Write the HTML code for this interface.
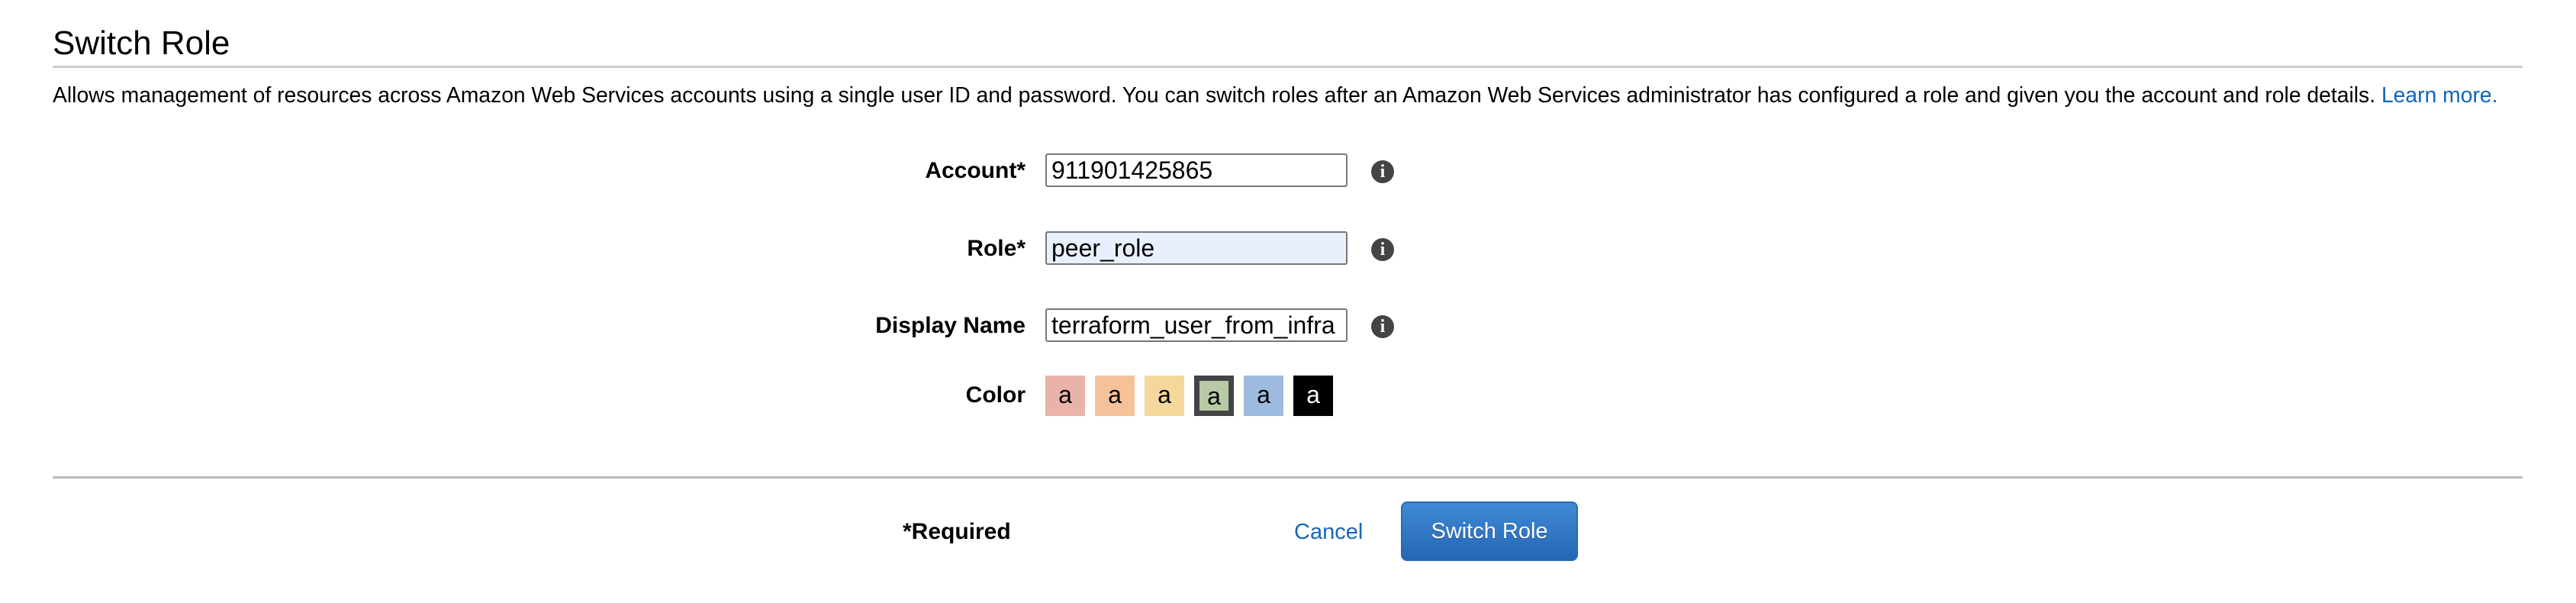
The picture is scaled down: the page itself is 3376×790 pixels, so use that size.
<!DOCTYPE html>
<html><head><style>
body{margin:0;width:3376px;height:790px;background:#fff;font-family:"Liberation Sans",sans-serif;position:relative;overflow:hidden;color:#000}
.a{position:absolute;white-space:nowrap}
.lbl{position:absolute;right:2032px;font-weight:bold;font-size:30px;line-height:40px}
.inp{position:absolute;left:1370px;width:396px;height:44px;border:2px solid #777;border-radius:3px;box-sizing:border-box;font-size:32px;line-height:40px;padding-left:6px;overflow:hidden;white-space:nowrap}
.info{position:absolute;left:1797px;width:30px;height:30px;border-radius:50%;background:#444;color:#fff;font-family:"Liberation Serif",serif;font-weight:bold;font-size:24px;line-height:30px;text-align:center}
.sw{position:absolute;top:492px;width:52px;height:53px;box-sizing:border-box;font-size:32px;line-height:50px;text-align:center}
</style></head><body>
<div class="a" style="left:69px;top:32px;font-size:44px;line-height:50px">Switch Role</div>
<div class="a" style="left:69px;top:86px;width:3237px;height:3px;background:#ccc"></div>
<div class="a" style="left:69px;top:106px;font-size:28.3px;line-height:36px">Allows management of resources across Amazon Web Services accounts using a single user ID and password. You can switch roles after an Amazon Web Services administrator has configured a role and given you the account and role details. <span style="color:#1166bb">Learn more.</span></div>

<div class="lbl" style="top:204px">Account*</div>
<div class="inp" style="top:201px">911901425865</div>
<div class="info" style="top:210px">i</div>

<div class="lbl" style="top:306px">Role*</div>
<div class="inp" style="top:303px;background:#e8f0fe">peer_role</div>
<div class="info" style="top:312px">i</div>

<div class="lbl" style="top:407px">Display Name</div>
<div class="inp" style="top:404px">terraform_user_from_infra</div>
<div class="info" style="top:413px">i</div>

<div class="lbl" style="top:498px">Color</div>
<div class="sw" style="left:1370px;background:#eab3aa">a</div>
<div class="sw" style="left:1435px;background:#f4c199">a</div>
<div class="sw" style="left:1500px;background:#f6d79b">a</div>
<div class="sw" style="left:1565px;background:#b8c9a5;border:7px solid #444;line-height:40px">a</div>
<div class="sw" style="left:1630px;background:#9dbbdf">a</div>
<div class="sw" style="left:1695px;background:#000;color:#fff">a</div>

<div class="a" style="left:69px;top:624px;width:3237px;height:3px;background:#bbb"></div>
<div class="a" style="left:1183px;top:677px;font-weight:bold;font-size:30px;line-height:40px">*Required</div>
<div class="a" style="left:1696px;top:677px;font-size:29px;line-height:40px;color:#1a66bb">Cancel</div>
<div class="a" style="left:1836px;top:657px;width:232px;height:78px;box-sizing:border-box;border:2px solid #2a6ab8;border-radius:8px;background:linear-gradient(#4189d6,#2467b4);color:#fff;font-size:29px;line-height:74px;text-align:center;text-shadow:0 1px 1px rgba(0,0,0,.3)">Switch Role</div>
</body></html>
